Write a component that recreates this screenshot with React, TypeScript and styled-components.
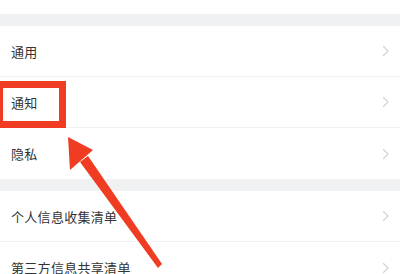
import styled, { createGlobalStyle } from "styled-components";

const GlobalStyle = createGlobalStyle`
  html, body {
    margin: 0;
    padding: 0;
    background: #ffffff;
  }
  body {
    font-family: "Noto Sans CJK SC", "Noto Sans", sans-serif;
  }
`;

const sections = [
  ["通用", "通知", "隐私"],
  ["个人信息收集清单", "第三方信息共享清单"],
];

const Chevron = () => (
  <svg width="8" height="12" viewBox="0 0 8 12">
    <path
      d="M1.5 1.5 L6 6 L1.5 10.5"
      fill="none"
      stroke="#d4d4d6"
      strokeWidth="1.3"
      strokeLinecap="round"
      strokeLinejoin="round"
    />
  </svg>
);

export default function App() {
  return (
    <Page>
      <GlobalStyle />
      <TopSpace />
      {sections.map((items, si) => (
        <Section key={si}>
          <Band />
          {items.map((label, i) => (
            <Row key={label} $last={i === items.length - 1}>
              <Label>{label}</Label>
              <Chevron />
            </Row>
          ))}
        </Section>
      ))}
      <Highlight />
      <Arrow width="400" height="274" viewBox="0 0 400 274">
        <path d="M158 268 L162 264 L88 156 L80 162 Z" fill="#f03c22" />
        <path d="M68 137 L93 150 L70 170 Z" fill="#f03c22" />
      </Arrow>
    </Page>
  );
}

const Page = styled.div`
  position: relative;
  width: 400px;
  height: 274px;
  overflow: hidden;
  background: #ffffff;
`;

const TopSpace = styled.div`
  height: 14px;
  background: #ffffff;
`;

const Section = styled.div`
  display: flex;
  flex-direction: column;
`;

const Band = styled.div`
  height: 12px;
  background: #f0f1f3;
`;

const Row = styled.div<{ $last?: boolean }>`
  height: 51px;
  box-sizing: border-box;
  display: flex;
  align-items: center;
  justify-content: space-between;
  padding: 0 10px 0 11px;
  border-bottom: ${(p) => (p.$last ? "none" : "1px solid #f2f2f4")};
`;

const Label = styled.span`
  font-size: 13px;
  color: #333333;
  letter-spacing: 0.3px;
`;

const Highlight = styled.div`
  position: absolute;
  left: -4px;
  top: 81px;
  width: 70px;
  height: 47px;
  box-sizing: border-box;
  border: 7px solid #f03c22;
`;

const Arrow = styled.svg`
  position: absolute;
  left: 0;
  top: 0;
  pointer-events: none;
`;
